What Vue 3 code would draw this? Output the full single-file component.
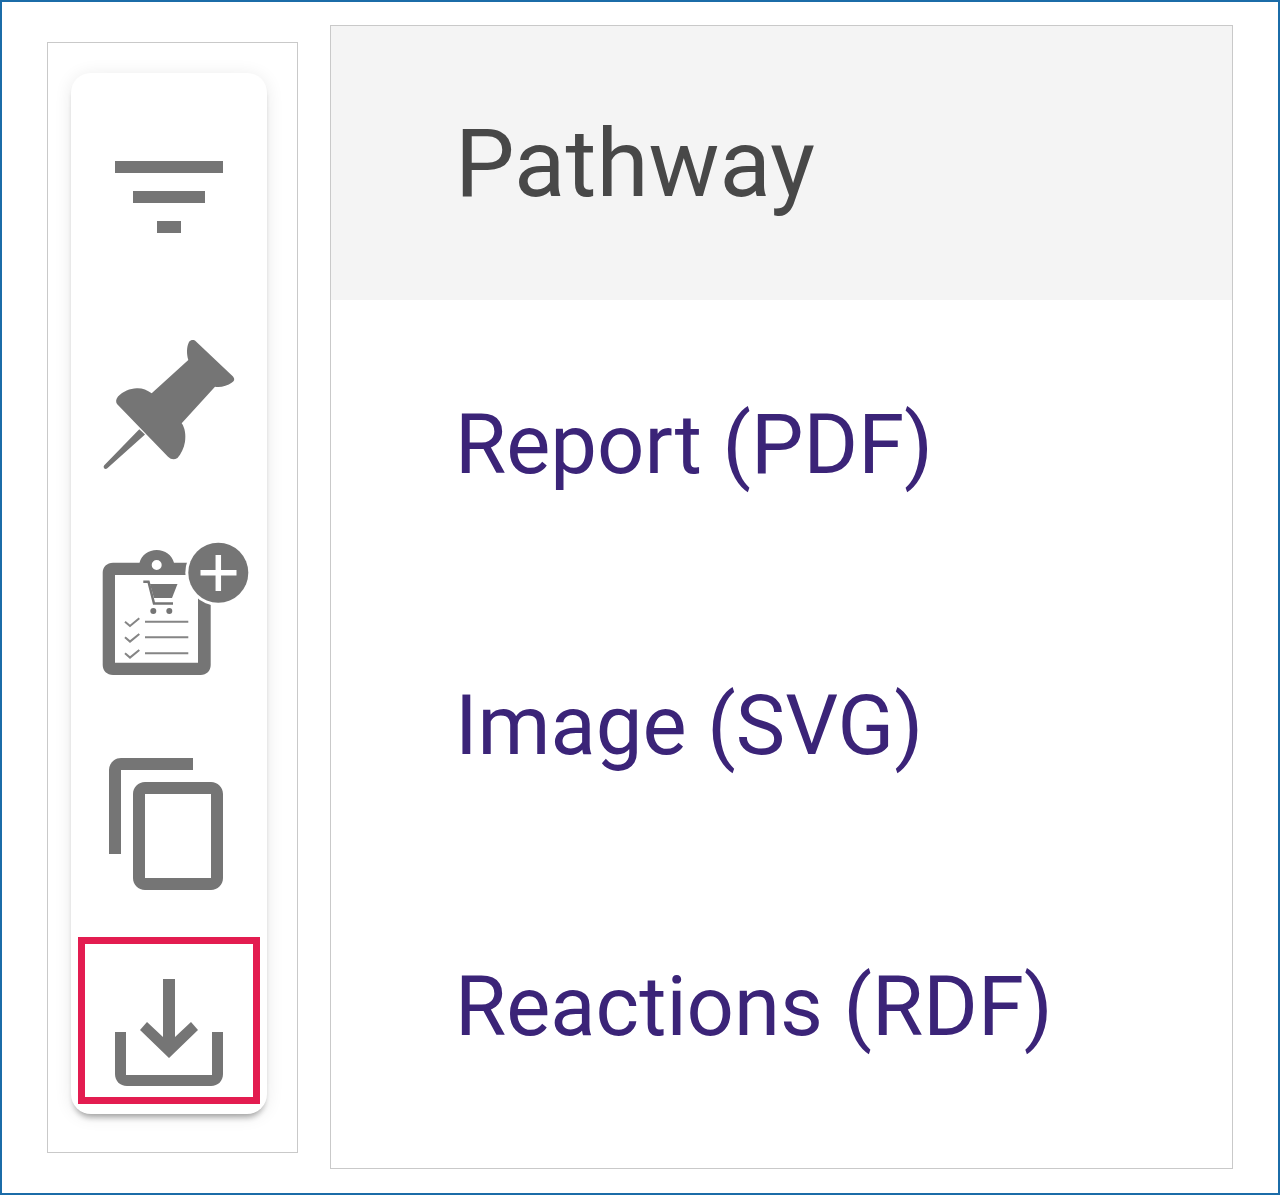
<script setup>
const links = ['Report (PDF)', 'Image (SVG)', 'Reactions (RDF)']
</script>

<template>
  <div class="frame">
    <aside class="side">
      <div class="card">
        <svg class="icon" viewBox="0 0 24 24"><path d="M10 18h4v-2h-4v2zM3 6v2h18V6H3zm3 7h12v-2H6v2z" /></svg>

        <svg class="icon" viewBox="97 333 144 144">
          <path d="M189 342C191 339.500 194 339.500 196 341.500L233 376.500C235 379 234.500 381 232 382.500C227 386 221 387.500 215 386.700L181.700 423.300C185 428 186 435 185 441.700C184 448 181 454 177.500 458C174 460 171 459.500 168 456.700L117 404C115.500 401.500 116 399 118 396.500C123 391.500 130 388.500 136.700 388.300C142 388 147 390 151.700 393.300L188.300 360C186.500 354 186.500 347 189 342Z" />
          <path d="M139.300 429.300L145 434.500L107.300 468.300C106 469.500 104.500 469 104 468C103.500 467 103.500 466 104.500 465Z" />
        </svg>

        <svg class="icon" viewBox="97 541 144 144">
          <path fill-rule="evenodd" d="M113 562.700H139.500C141.500 555 148.500 550 156.700 550C165 550 172 555 174 562.700H200.700C206.500 562.700 210.700 567 210.700 572.700V665C210.700 670.700 206.500 675 200.700 675H113C107 675 102.700 670.700 102.700 665V572.700C102.700 567 107 562.700 113 562.700ZM115 575V662.700H198V575ZM156.700 560A5 5 0 1 0 156.700 570A5 5 0 1 0 156.700 560Z" />
          <path d="M150 584H177.500L172 598H154Z" />
          <path class="line" stroke-width="2.500" d="M143.300 581.700H148.500L154 603.500H173" />
          <circle cx="153.300" cy="611" r="3" />
          <circle cx="169.300" cy="611" r="3" />
          <path class="line thin" d="M125 621.700L130 626L139.300 618.300M145 621.700H188.300M125 637.300L130 641.600L139.300 633.900M145 637.300H188.300M125 653.300L130 657.600L139.300 649.900M145 653.300H188.300" />
          <circle cx="218.300" cy="572.700" r="33" fill="#fff" />
          <circle cx="218.300" cy="572.700" r="30" />
          <path class="line plus" d="M200.500 572.700H236.500M218.300 555V591" />
        </svg>

        <svg class="icon" viewBox="0 -0.500 24 24"><path d="M16 1H4c-1.100 0-2 .9-2 2v14h2V3h12V1zm3 4H8c-1.100 0-2 .9-2 2v14c0 1.100.9 2 2 2h11c1.100 0 2-.9 2-2V7c0-1.100-.9-2-2-2zm0 16H8V7h11v14z" /></svg>

        <div class="selected">
          <svg class="icon" viewBox="97 960 144 144">
            <path d="M163 979H175V1037L191 1022L198 1030L169 1058L140 1030L147 1022L163 1037Z" />
            <path d="M115 1032H126V1075H212V1032H223V1074C223 1081 218 1086 211 1086H127C120 1086 115 1081 115 1074Z" />
          </svg>
        </div>
      </div>
    </aside>

    <section class="menu">
      <h2 class="title">Pathway</h2>
      <ul class="links">
        <li v-for="link in links" :key="link">{{ link }}</li>
      </ul>
    </section>
  </div>
</template>

<style>
html,
body {
  margin: 0;
  background: #fff;
}
</style>

<style scoped>
.frame {
  box-sizing: border-box;
  width: 1280px;
  height: 1195px;
  display: flex;
  align-items: flex-start;
  gap: 32px;
  padding: 23px 45px 0;
  border: 2px solid #1b6ca8;
  background: #fff;
  font-family: Roboto, "Liberation Sans", sans-serif;
}

.side {
  box-sizing: border-box;
  flex: none;
  width: 251px;
  height: 1111px;
  margin-top: 17px;
  padding: 30px 0 0 23px;
  border: 1px solid #c9c9c9;
  filter: blur(0.5px);
}

.card {
  box-sizing: border-box;
  width: 196px;
  height: 1041px;
  padding: 52px 7px 10px;
  display: flex;
  flex-direction: column;
  align-items: center;
  gap: 64px;
  border-radius: 20px;
  background: #fff;
  box-shadow: 0 6px 6px -3px rgba(0, 0, 0, 0.35), 0 2px 18px rgba(0, 0, 0, 0.09);
}

.icon {
  display: block;
  flex: none;
  width: 144px;
  height: 144px;
  overflow: visible;
  fill: #757575;
}

.line {
  fill: none;
  stroke: #757575;
}

.thin {
  stroke-width: 2;
  stroke: #858585;
}

.plus {
  stroke: #fff;
  stroke-width: 5.500;
}

.selected {
  box-sizing: border-box;
  width: 182px;
  height: 167px;
  margin-top: -20px;
  padding-top: 16px;
  display: flex;
  justify-content: center;
  border: 7px solid #e31c50;
}

.menu {
  box-sizing: border-box;
  flex: none;
  width: 903px;
  height: 1144px;
  border: 1px solid #c9c9c9;
  filter: blur(0.5px);
}

.title {
  box-sizing: border-box;
  height: 274px;
  margin: 0;
  padding-left: 124px;
  display: flex;
  align-items: center;
  background: #f4f4f4;
  color: #484848;
  font-size: 94.500px;
  font-weight: 400;
}

.links {
  margin: 0;
  padding: 4px 0 0 124px;
  list-style: none;
  color: #3b2478;
  font-size: 83.200px;
}

.links li {
  height: 281px;
  display: flex;
  align-items: center;
}
</style>
